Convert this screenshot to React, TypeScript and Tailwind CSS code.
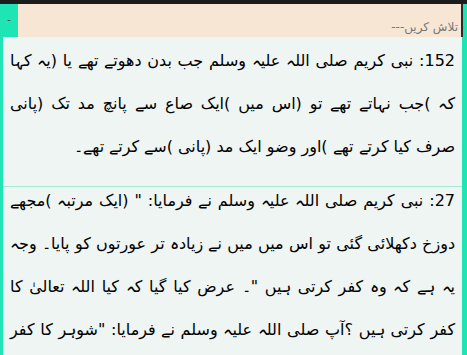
import React from "react";

const hadith = [
  {
    id: 152,
    text: "152: نبی کریم صلی اللہ علیہ وسلم جب بدن دھوتے تھے یا (یہ کہا کہ )جب نہاتے تھے تو (اس میں )ایک صاع سے پانچ مد تک (پانی صرف کیا کرتے تھے )اور وضو ایک مد (پانی )سے کرتے تھے۔",
  },
  {
    id: 27,
    text: "27: نبی کریم صلی اللہ علیہ وسلم نے فرمایا: \" (ایک مرتبہ )مجھے دوزخ دکھلائی گئی تو اس میں میں نے زیادہ تر عورتوں کو پایا۔ وجہ یہ ہے کہ وہ کفر کرتی ہیں \"۔ عرض کیا گیا کہ کیا اللہ تعالیٰ کا کفر کرتی ہیں ؟آپ صلی اللہ علیہ وسلم نے فرمایا: \"شوہر کا کفر (ناشکری) کرتی ہیں۔\"",
  },
];

const App = () => {
  const [query, setQuery] = React.useState("");

  return (
    <div className="w-[467px] h-[355px] overflow-hidden bg-[#1fe4b3] flex flex-col">
      <div className="h-[4px] shrink-0 bg-[#1c1c1c]" />
      <div className="flex h-[33px] shrink-0">
        <button className="w-[18px] bg-[#1fe4b3] text-[#444] text-[11px] leading-none pt-[9px] flex justify-center items-start">
          -
        </button>
        <input
          dir="rtl"
          value={query}
          onChange={(e) => setQuery(e.currentTarget.value)}
          placeholder="تلاش کریں---"
          className="flex-1 bg-[#f6e6d3] border-r-2 border-[#2a2a2a] px-[3px] pt-[12px] text-[12px] text-[#555] placeholder:text-[#777] outline-none"
          style={{ fontFamily: "'DejaVu Sans', sans-serif" }}
        />
        <div className="w-[4px]" />
      </div>
      <div className="flex-1 min-h-0 pl-[3px] pr-[5px] flex flex-col">
        {hadith.map((h, i) => (
          <div
            key={h.id}
            dir="rtl"
            className="shrink-0 bg-[#eef5f3] px-[7px] pb-[18px] text-[16px] leading-[43px] text-black text-justify border-b border-[#a5e9d6]"
            style={{ fontFamily: "'DejaVu Sans', sans-serif" }}
          >
            <div className={i === 0 ? "mt-[2px]" : "-mt-[8px]"}>{h.text}</div>
          </div>
        ))}
      </div>
    </div>
  );
};

export default App;
